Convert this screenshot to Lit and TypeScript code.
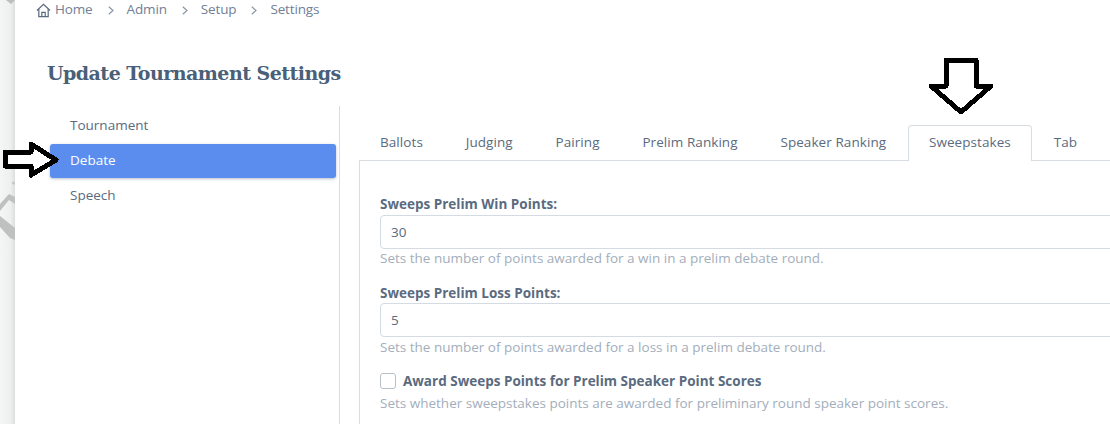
import { LitElement, html, css } from 'lit';
import { customElement } from 'lit/decorators.js';

const TABS = ['Ballots', 'Judging', 'Pairing', 'Prelim Ranking', 'Speaker Ranking', 'Sweepstakes', 'Tab'];

@customElement('app-root')
export class AppRoot extends LitElement {
  static styles = css`
    :host {
      display: block;
      width: 1110px;
      height: 424px;
      overflow: hidden;
      position: relative;
      background: #fff;
      font-family: 'Open Sans', sans-serif;
      font-size: 13.5px;
      color: #4a5568;
    }
    .page {
      display: flex;
      height: 424px;
    }
    .strip {
      width: 15px;
      flex: none;
      position: relative;
      background: linear-gradient(90deg, #f4f5f5 0%, #eeefef 70%, #dcdddd 100%);
    }
    .strip svg {
      position: absolute;
      left: 0;
      top: 0;
    }
    .main {
      flex: 1;
      min-width: 0;
    }
    .crumbs {
      display: flex;
      align-items: center;
      height: 18px;
      padding-left: 21px;
      color: #718096;
      line-height: 18px;
      letter-spacing: -0.15px;
    }
    .crumbs svg.home {
      width: 15px;
      height: 15px;
      margin-right: 4px;
      margin-top: 2px;
    }
    .crumbs svg.sep {
      width: 6px;
      height: 9px;
      margin: 2px 13px 0 15px;
    }
    h1 {
      margin: 41px 0 0 32px;
      font-family: 'DejaVu Serif', serif;
      font-size: 19px;
      font-weight: 700;
      line-height: 28px;
      color: #4a5f78;
      letter-spacing: -0.52px;
    }
    .body {
      display: flex;
      margin-top: 19px;
    }
    .side {
      width: 325px;
      flex: none;
      box-sizing: border-box;
      padding: 0 3px 0 35px;
      height: 318px;
      border-right: 1px solid #d8dde3;
    }
    .side div {
      padding-left: 20px;
      border-radius: 3px;
      color: #5a6b80;
    }
    .side .top {
      height: 38px;
      line-height: 38px;
    }
    .side .on {
      height: 34px;
      line-height: 32px;
      background: #5a8dee;
      color: #fff;
      box-shadow: 0 1px 3px rgba(50, 70, 110, 0.35);
    }
    .side .last {
      height: 34px;
      line-height: 34px;
    }
    .content {
      flex: 1;
      min-width: 0;
      padding: 19px 0 0 19px;
    }
    .tabs {
      display: flex;
      height: 35px;
      border-bottom: 1px solid #d8dde3;
      box-sizing: content-box;
    }
    .tab {
      box-sizing: border-box;
      height: 36px;
      line-height: 32px;
      padding: 0 20.5px 0 20px;
      margin-right: 0.3px;
      color: #5a6b80;
      letter-spacing: 0.07px;
      border: 1px solid transparent;
      border-bottom: 0;
      border-radius: 4px 4px 0 0;
      white-space: nowrap;
    }
    .tab.on {
      background: #fff;
      border-color: #d8dde3;
      position: relative;
    }
    .panel {
      border-left: 1px solid #d8dde3;
      padding: 34px 0 0 20px;
      height: 300px;
      box-sizing: border-box;
      margin-right: -60px;
    }
    label {
      display: block;
      font-weight: 700;
      color: #5a6b80;
      line-height: 18px;
    }
    .input {
      height: 34px;
      box-sizing: border-box;
      margin-top: 2px;
      padding-left: 10px;
      line-height: 32px;
      border: 1px solid #d5dbe2;
      border-radius: 4px;
      color: #5a6b80;
    }
    .field + .field .input {
      margin-top: 1.5px;
    }
    .help {
      line-height: 18px;
      color: #a3aebb;
    }
    .field + .field .help {
      margin-top: 0.5px;
    }
    .field {
      margin-bottom: 16.5px;
    }
    .check {
      display: flex;
      align-items: center;
      margin-top: 16.5px;
      margin-bottom: 4px;
    }
    .check .box {
      width: 16px;
      height: 16px;
      box-sizing: border-box;
      border: 1px solid #b8c0ca;
      border-radius: 3px;
      margin-right: 7px;
    }
    .arrow {
      position: absolute;
      overflow: visible;
    }
  `;

  render() {
    const crumbs = ['Admin', 'Setup', 'Settings'];
    return html`
      <div class="page">
        <div class="strip">
          <svg width="15" height="424" viewBox="0 0 15 424">
            <path d="M6 0 L11 4 L15 0 Z" fill="#bcbdbd" />
            <circle cx="13.5" cy="183" r="1.5" fill="#c4c5c5" />
            <path d="M0 204 L9 194 L15 197 L15 204 L9 200 L0 211 Z" fill="#bfc0c0" />
            <path d="M0 216 L15 228 L15 240 L10 238 L0 227 Z" fill="#bfc0c0" />
          </svg>
        </div>
        <div class="main">
          <div class="crumbs">
            <svg class="home" viewBox="0 0 16 16" fill="none" stroke="#5a6b80" stroke-width="1.3">
              <path d="M1 8 L8 1.5 L15 8" />
              <path d="M3 6.5 V14.5 H13 V6.5" />
              <path d="M6.2 14.5 V10 H9.8 V14.5" />
            </svg>
            <span>Home</span>
            ${crumbs.map(
              (c) => html`
                <svg class="sep" viewBox="0 0 6 9" fill="none" stroke="#8a97a6" stroke-width="1.2">
                  <path d="M.8 .8 L5 4.5 L.8 8.2" />
                </svg>
                <span>${c}</span>
              `,
            )}
          </div>
          <h1>Update Tournament Settings</h1>
          <div class="body">
            <div class="side">
              <div class="top">Tournament</div>
              <div class="on">Debate</div>
              <div class="last">Speech</div>
            </div>
            <div class="content">
              <div class="tabs">
                ${TABS.map((t) => html`<div class="tab ${t === 'Sweepstakes' ? 'on' : ''}">${t}</div>`)}
              </div>
              <div class="panel">
                <div class="field">
                  <label>Sweeps Prelim Win Points:</label>
                  <div class="input">30</div>
                  <div class="help">Sets the number of points awarded for a win in a prelim debate round.</div>
                </div>
                <div class="field">
                  <label>Sweeps Prelim Loss Points:</label>
                  <div class="input">5</div>
                  <div class="help">Sets the number of points awarded for a loss in a prelim debate round.</div>
                </div>
                <div class="check">
                  <div class="box"></div>
                  <label>Award Sweeps Points for Prelim Speaker Point Scores</label>
                </div>
                <div class="help">Sets whether sweepstakes points are awarded for preliminary round speaker point scores.</div>
              </div>
            </div>
          </div>
        </div>
      </div>
      <svg class="arrow" style="left:0;top:0" width="1110" height="424" fill="none" stroke="#000" stroke-width="5" stroke-linejoin="round" shape-rendering="crispEdges">
        <path d="M5 152 H31 V144 L56 160 L31 175 V166 H5 Z" fill="#fff" />
        <path d="M946 60 H976 V86 H991 L961 112 L931 86 H946 Z" fill="#fff" />
      </svg>
    `;
  }
}
